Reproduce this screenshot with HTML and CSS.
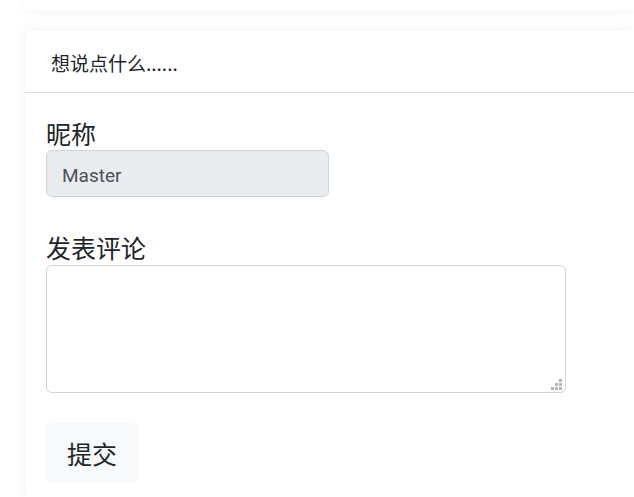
FILE: index.html
```html
<!DOCTYPE html>
<html lang="zh">
<head>
<meta charset="utf-8">
<link rel="stylesheet" href="styles.css">
</head>
<body>
<div class="page">
  <div class="card card-top"></div>
  <div class="card">
    <div class="card-header">想说点什么......</div>
    <div class="card-body">
      <div class="form-group form-group-first">
        <label class="form-label">昵称</label>
        <input class="form-input" type="text" value="Master" readonly>
      </div>
      <div class="form-group">
        <label class="form-label">发表评论</label>
        <div class="textarea-wrap">
          <textarea class="form-textarea"></textarea>
          <svg class="grip" width="11" height="11" viewBox="0 0 11 11">
            <rect x="8" y="0" width="3" height="3" fill="#b4b4b4"/>
            <rect x="4" y="4" width="3" height="3" fill="#b4b4b4"/>
            <rect x="8" y="4" width="3" height="3" fill="#b4b4b4"/>
            <rect x="0" y="8" width="3" height="3" fill="#b4b4b4"/>
            <rect x="4" y="8" width="3" height="3" fill="#b4b4b4"/>
            <rect x="8" y="8" width="3" height="3" fill="#b4b4b4"/>
          </svg>
        </div>
      </div>
      <button class="btn">提交</button>
    </div>
  </div>
</div>
</body>
</html>
```
FILE: styles.css
```css
html, body {
  margin: 0;
  padding: 0;
  background: #ffffff;
  overflow: hidden;
  height: 497px;
}
body {
  font-family: "Segoe UI", Roboto, "Noto Sans CJK SC", sans-serif;
  color: #212529;
}
.page {
  padding-left: 25px;
}
.card {
  background: #fff;
  box-shadow: 0 0 14px rgba(0, 0, 0, 0.06);
  width: 609px;
}
.card-top {
  height: 10px;
  margin-bottom: 21px;
}
.card-header {
  height: 62px;
  box-sizing: border-box;
  padding: 2px 26px 0;
  display: flex;
  align-items: center;
  font-size: 19px;
  border-bottom: 1px solid #dee2e6;
  font-family: "Noto Sans CJK SC", sans-serif;
}
.card-body {
  padding: 25px 21px 0;
  height: 379px;
}
.form-group {
  display: flex;
  flex-direction: column;
  align-items: flex-start;
  margin-bottom: 30px;
}
.form-group-first {
  margin-bottom: 35px;
}
.form-label {
  font-family: "Noto Sans CJK SC", sans-serif;
  font-size: 25px;
  line-height: 30px;
  margin-bottom: 2px;
}
.form-input {
  width: 283px;
  height: 47px;
  box-sizing: border-box;
  border: 1px solid #ced4da;
  border-radius: 6px;
  background: #e9ecef;
  padding: 3px 15px 0;
  font-family: "Segoe UI", Roboto, sans-serif;
  font-size: 19px;
  color: #495057;
  outline: none;
}
.textarea-wrap {
  position: relative;
  margin-top: 1px;
  display: flex;
}
.form-textarea {
  width: 520px;
  height: 128px;
  box-sizing: border-box;
  border: 1px solid #ced4da;
  border-radius: 6px;
  background: #fff;
  margin: 0;
  resize: none;
}
.grip {
  position: absolute;
  right: 4px;
  bottom: 3px;
}
.btn {
  width: 92px;
  height: 59px;
  border: none;
  border-radius: 6px;
  background: #f8f9fa;
  font-family: "Noto Sans CJK SC", sans-serif;
  font-size: 25px;
  color: #212529;
  padding: 0;
}
```
